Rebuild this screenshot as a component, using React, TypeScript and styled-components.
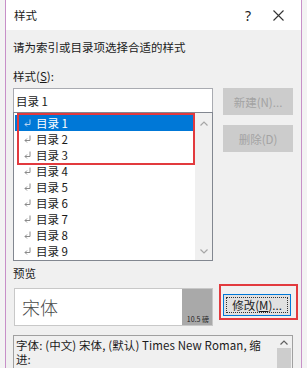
import styled, { createGlobalStyle } from 'styled-components';

const GlobalStyle = createGlobalStyle`
  html, body {
    margin: 0;
    padding: 0;
    background: #f3f3f3;
  }
  body {
    font-family: "Noto Sans CJK SC", "Noto Sans", sans-serif;
    font-size: 11.5px;
    color: #1a1a1a;
  }
  * {
    box-sizing: border-box;
  }
`;

const Screen = styled.div`
  width: 307px;
  height: 368px;
  overflow: hidden;
  padding: 0 5px;
  background: #f3f3f3;
`;

const Window = styled.div`
  height: 100%;
  border-left: 1px solid #c790c8;
  border-right: 1px solid #c790c8;
  background: #f0f0f0;
  display: flex;
  flex-direction: column;
`;

const TitleBar = styled.div`
  height: 30px;
  flex-shrink: 0;
  background: #ffffff;
  display: flex;
  align-items: center;
  padding: 0 8px;
`;

const Title = styled.div`
  flex: 1;
  line-height: 17px;
`;

const TitleButton = styled.div`
  width: 30px;
  height: 30px;
  display: flex;
  align-items: center;
  justify-content: center;
  font-family: "Noto Sans", sans-serif;
  font-size: 14px;
  color: #222;
`;

const Body = styled.div`
  padding: 0 8px 0 7px;
  display: flex;
  flex-direction: column;
`;

const Text = styled.div<{ $top: number }>`
  line-height: 17px;
  margin-top: ${(p) => p.$top}px;
  white-space: nowrap;

  u {
    text-decoration: underline;
  }
`;

const MainRow = styled.div`
  display: flex;
  gap: 10px;
  margin-top: 3px;
`;

const LeftColumn = styled.div`
  width: 200px;
  display: flex;
  flex-direction: column;
`;

const RightColumn = styled.div`
  width: 70px;
  display: flex;
  flex-direction: column;
  gap: 10px;
`;

const StyleInput = styled.div`
  height: 24px;
  background: #fff;
  border: 1px solid #a9abb1;
  border-bottom: none;
  display: flex;
  align-items: center;
  padding-left: 2px;
  padding-top: 1px;
`;

const ListBox = styled.div`
  position: relative;
  height: 149px;
  background: #fff;
  border: 1px solid #828790;
  display: flex;
`;

const Rows = styled.div`
  flex: 1;
  padding: 2px 1px 0;
`;

const Row = styled.div<{ $selected?: boolean }>`
  height: 16px;
  display: flex;
  align-items: center;
  gap: 5px;
  padding-left: 9px;
  background: ${(p) => (p.$selected ? '#0078d7' : 'transparent')};
  color: ${(p) => (p.$selected ? '#ffffff' : '#1a1a1a')};

  svg {
    color: ${(p) => (p.$selected ? '#b8d4f0' : '#8a8a8a')};
  }
`;

const ScrollBar = styled.div`
  width: 17px;
  background: #f0f0f0;
  display: flex;
  flex-direction: column;
  justify-content: space-between;
`;

const Arrow = styled.div<{ $h: number }>`
  height: ${(p) => p.$h}px;
  display: flex;
  align-items: center;
  justify-content: center;
  color: #a6a6a6;
`;

const Highlight = styled.div`
  position: absolute;
  border: 2px solid #e23a3e;
  pointer-events: none;
`;

const ListHighlight = styled(Highlight)`
  left: 3px;
  top: 0;
  width: 178px;
  height: 52px;
`;

const ButtonHighlight = styled(Highlight)`
  left: -4px;
  top: -10px;
  width: 79px;
  height: 36px;
`;

const DisabledButton = styled.div`
  height: 27px;
  background: #cccccc;
  border: 1px solid #cccccc;
  color: #a3a3a3;
  display: flex;
  align-items: center;
  justify-content: center;
`;

const PreviewRow = styled.div`
  display: flex;
  align-items: flex-start;
  margin-top: 6px;
`;

const PreviewBox = styled.div`
  margin-left: 1px;
  width: 199px;
  height: 38px;
  border: 1px solid #c8c8c8;
  background: #fff;
  display: flex;
`;

const PreviewFont = styled.div`
  flex: 1;
  display: flex;
  align-items: center;
  padding-left: 7px;
  font-size: 18px;
  font-weight: 300;
  color: #4a4a4a;
`;

const SizeTag = styled.div`
  width: 30px;
  background: #a9a9a9;
  display: flex;
  align-items: flex-end;
  justify-content: flex-end;
  padding: 0 3px 1px 0;
  font-size: 7px;
  line-height: 9px;
  color: #222;
`;

const ButtonSlot = styled.div`
  position: relative;
  margin: 6px 0 0 10px;
`;

const ModifyButton = styled.div`
  width: 68px;
  height: 22px;
  background: #e1e1e1;
  border: 1px solid #0078d7;
  padding: 2px;

  span {
    display: flex;
    align-items: center;
    justify-content: center;
    height: 100%;
    border: 1px dotted #333;
  }

  u {
    text-decoration: underline;
  }
`;

const Description = styled.div`
  margin-top: 9px;
  width: 280px;
  height: 40px;
  border: 1px solid #a0a0a0;
  background: #f0f0f0;
  display: flex;
`;

const DescriptionText = styled.div`
  flex: 1;
  padding: 3px 10px 0 2px;
  line-height: 13.5px;
  letter-spacing: 0.1px;
`;

const DescScroll = styled.div`
  width: 16px;
  display: flex;
  flex-direction: column;
  align-items: center;
  padding-top: 4px;
  color: #606060;
`;

const Thumb = styled.div`
  margin-top: 3px;
  width: 14px;
  flex: 1;
  background: #cdcdcd;
`;

const ReturnMark = () => (
  <svg width="7" height="8" viewBox="0 0 7 8" fill="none" stroke="currentColor" strokeWidth="1">
    <path d="M6 0.5V5.5H1" />
    <path d="M3 3.5L1 5.5L3 7.5" />
  </svg>
);

const ChevronUp = () => (
  <svg width="8" height="5" viewBox="0 0 8 5" fill="none" stroke="currentColor" strokeWidth="1.2">
    <path d="M0.5 4.5L4 1L7.5 4.5" />
  </svg>
);

const ChevronDown = () => (
  <svg width="8" height="5" viewBox="0 0 8 5" fill="none" stroke="currentColor" strokeWidth="1.2">
    <path d="M0.5 0.5L4 4L7.5 0.5" />
  </svg>
);

const CloseIcon = () => (
  <svg width="11" height="11" viewBox="0 0 11 11" stroke="#333" strokeWidth="1.1">
    <path d="M0.5 0.5L10.5 10.5M10.5 0.5L0.5 10.5" />
  </svg>
);

const entries = ['目录 1', '目录 2', '目录 3', '目录 4', '目录 5', '目录 6', '目录 7', '目录 8', '目录 9'];

export default function App() {
  return (
    <>
      <GlobalStyle />
      <Screen>
        <Window>
          <TitleBar>
            <Title>样式</Title>
            <TitleButton>?</TitleButton>
            <TitleButton>
              <CloseIcon />
            </TitleButton>
          </TitleBar>

          <Body>
            <Text $top={9}>请为索引或目录项选择合适的样式</Text>
            <Text $top={12}>
              样式(<u>S</u>):
            </Text>

            <MainRow>
              <LeftColumn>
                <StyleInput>目录 1</StyleInput>
                <ListBox>
                  <Rows>
                    {entries.map((e, i) => (
                      <Row key={e} $selected={i === 0}>
                        <ReturnMark />
                        {e}
                      </Row>
                    ))}
                  </Rows>
                  <ScrollBar>
                    <Arrow $h={20}>
                      <ChevronUp />
                    </Arrow>
                    <Arrow $h={17}>
                      <ChevronDown />
                    </Arrow>
                  </ScrollBar>
                  <ListHighlight />
                </ListBox>
              </LeftColumn>
              <RightColumn>
                <DisabledButton>新建(N)...</DisabledButton>
                <DisabledButton>删除(D)</DisabledButton>
              </RightColumn>
            </MainRow>

            <Text $top={4}>预览</Text>

            <PreviewRow>
              <PreviewBox>
                <PreviewFont>宋体</PreviewFont>
                <SizeTag>10.5 磅</SizeTag>
              </PreviewBox>
              <ButtonSlot>
                <ModifyButton>
                  <span>
                    修改(<u>M</u>)...
                  </span>
                </ModifyButton>
                <ButtonHighlight />
              </ButtonSlot>
            </PreviewRow>

            <Description>
              <DescriptionText>字体: (中文) 宋体, (默认) Times New Roman, 缩进:</DescriptionText>
              <DescScroll>
                <ChevronUp />
                <Thumb />
              </DescScroll>
            </Description>
          </Body>
        </Window>
      </Screen>
    </>
  );
}
